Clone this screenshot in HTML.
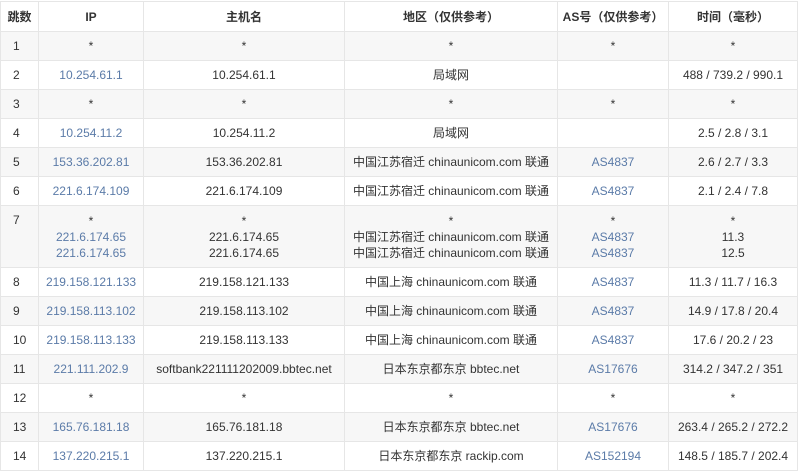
<!DOCTYPE html><html><head><meta charset="utf-8"><style>
body{margin:0;background:#fff;font-family:"Liberation Sans","Noto Sans CJK SC",sans-serif;font-size:12px;color:#333}
table{border-collapse:collapse;table-layout:fixed;width:797px;position:absolute;left:0;top:1px}
td,th{border:1px solid #e6e6e6;text-align:center;padding:0;line-height:16px;white-space:nowrap;overflow:hidden}
th{height:29px;font-weight:bold;color:#333}
td{height:28px}
tr.o td{background:#f7f7f7}
td:first-child{text-align:left;padding-left:12px}
tr.t td{height:61px}
tr.t td div{height:16px;line-height:16px;overflow:hidden}
tr.t td:first-child{vertical-align:top;padding-top:6px;height:55px}
a{color:#5b7ba8;text-decoration:none}
</style></head><body><table>
<colgroup><col style="width:38px"><col style="width:105px"><col style="width:201px"><col style="width:213px"><col style="width:111px"><col style="width:129px"></colgroup>
<tr><th>跳数</th><th>IP</th><th>主机名</th><th>地区（仅供参考）</th><th>AS号（仅供参考）</th><th>时间（毫秒）</th></tr>
<tr class="o"><td>1</td><td>*</td><td>*</td><td>*</td><td>*</td><td>*</td></tr>
<tr><td>2</td><td><a>10.254.61.1</a></td><td>10.254.61.1</td><td>局域网</td><td></td><td>488 / 739.2 / 990.1</td></tr>
<tr class="o"><td>3</td><td>*</td><td>*</td><td>*</td><td>*</td><td>*</td></tr>
<tr><td>4</td><td><a>10.254.11.2</a></td><td>10.254.11.2</td><td>局域网</td><td></td><td>2.5 / 2.8 / 3.1</td></tr>
<tr class="o"><td>5</td><td><a>153.36.202.81</a></td><td>153.36.202.81</td><td>中国江苏宿迁 chinaunicom.com 联通</td><td><a>AS4837</a></td><td>2.6 / 2.7 / 3.3</td></tr>
<tr><td>6</td><td><a>221.6.174.109</a></td><td>221.6.174.109</td><td>中国江苏宿迁 chinaunicom.com 联通</td><td><a>AS4837</a></td><td>2.1 / 2.4 / 7.8</td></tr>
<tr class="o t"><td>7</td><td><div>*</div><div><a>221.6.174.65</a></div><div><a>221.6.174.65</a></div></td><td><div>*</div><div>221.6.174.65</div><div>221.6.174.65</div></td><td><div>*</div><div>中国江苏宿迁 chinaunicom.com 联通</div><div>中国江苏宿迁 chinaunicom.com 联通</div></td><td><div>*</div><div><a>AS4837</a></div><div><a>AS4837</a></div></td><td><div>*</div><div>11.3</div><div>12.5</div></td></tr>
<tr><td>8</td><td><a>219.158.121.133</a></td><td>219.158.121.133</td><td>中国上海 chinaunicom.com 联通</td><td><a>AS4837</a></td><td>11.3 / 11.7 / 16.3</td></tr>
<tr class="o"><td>9</td><td><a>219.158.113.102</a></td><td>219.158.113.102</td><td>中国上海 chinaunicom.com 联通</td><td><a>AS4837</a></td><td>14.9 / 17.8 / 20.4</td></tr>
<tr><td>10</td><td><a>219.158.113.133</a></td><td>219.158.113.133</td><td>中国上海 chinaunicom.com 联通</td><td><a>AS4837</a></td><td>17.6 / 20.2 / 23</td></tr>
<tr class="o"><td>11</td><td><a>221.111.202.9</a></td><td>softbank221111202009.bbtec.net</td><td>日本东京都东京 bbtec.net</td><td><a>AS17676</a></td><td>314.2 / 347.2 / 351</td></tr>
<tr><td>12</td><td>*</td><td>*</td><td>*</td><td>*</td><td>*</td></tr>
<tr class="o"><td>13</td><td><a>165.76.181.18</a></td><td>165.76.181.18</td><td>日本东京都东京 bbtec.net</td><td><a>AS17676</a></td><td>263.4 / 265.2 / 272.2</td></tr>
<tr><td>14</td><td><a>137.220.215.1</a></td><td>137.220.215.1</td><td>日本东京都东京 rackip.com</td><td><a>AS152194</a></td><td>148.5 / 185.7 / 202.4</td></tr>
</table></body></html>
